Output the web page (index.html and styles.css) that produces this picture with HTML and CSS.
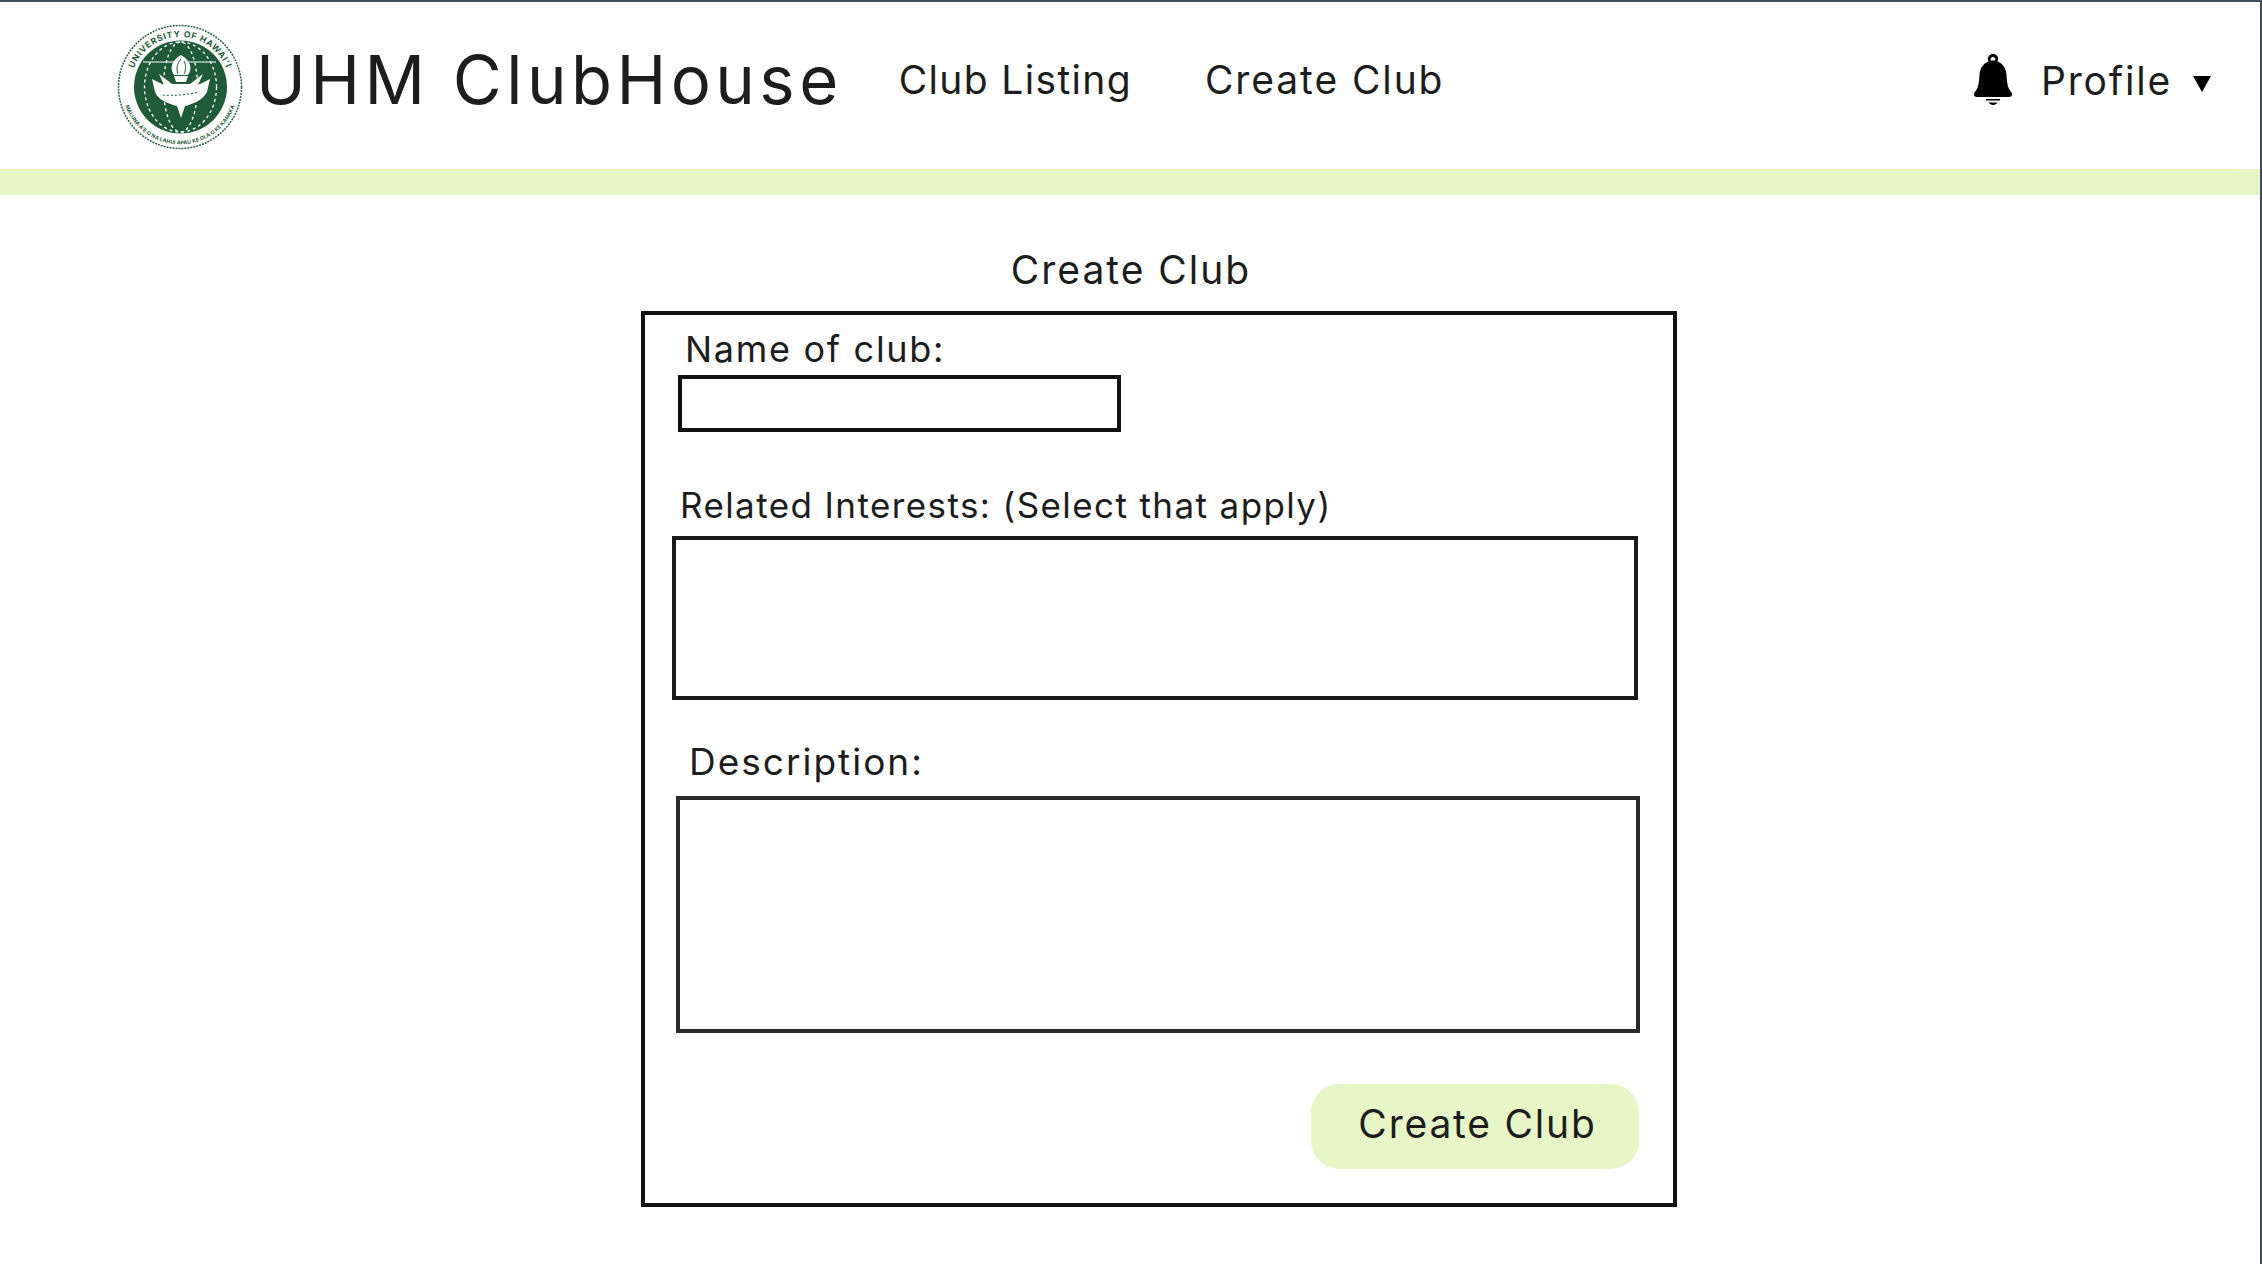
FILE: index.html
```html
<!DOCTYPE html>
<html lang="en">
<head>
    <meta charset="UTF-8">
    <meta name="viewport" content="width=device-width, initial-scale=1.0">
    <title>Create Club</title>
    <link rel="stylesheet" href="styles.css">
</head>
<body>

<div class="page">
    <header class="navbar">
        <svg class="seal" viewBox="0 0 126 126" aria-label="University of Hawaii seal">
            <defs>
                <path id="sealTop" d="M13.500 70 A50 50 0 1 1 112.500 70"/>
                <path id="sealBottom" d="M5.500 70 A58 58 0 0 0 120.500 70"/>
            </defs>
            <circle cx="63" cy="63" r="61.500" fill="#fff" stroke="#2c6143" stroke-width="1.500" stroke-dasharray="2 1"/>
            <circle cx="63.500" cy="63" r="46.500" fill="#1f5a39"/>
            <text class="seal-text"><textPath href="#sealTop" startOffset="50%" text-anchor="middle">UNIVERSITY OF HAWAI'I</textPath></text>
            <text class="seal-text small"><textPath href="#sealBottom" startOffset="50%" text-anchor="middle">MALUNA A'E O NA LAHUI APAU KE OLA O KE KANAKA</textPath></text>
            <ellipse class="seal-dots" cx="63.500" cy="63" rx="36" ry="45"/>
            <ellipse class="seal-dots" cx="63.500" cy="63" rx="17" ry="45"/>
            <path d="M26 38 H99" stroke="#fff" stroke-width="1.200" fill="none"/>
            <path d="M64 31 C55 36 52 44 57 51 H71 C76 44 73 36 64 31Z" fill="#fff"/>
            <path d="M64 35 C60 39 59 45 61 50 M67 37 C69 41 69 46 67 50" fill="none" stroke="#1f5a39" stroke-width="1"/>
            <path d="M57 52 H71 L69 58 H59Z" fill="#fff"/>
            <path d="M35 55 L47 61 L42 50 L55 60 H73 L86 50 L81 61 L93 55 L90 68 C86 76 76 80 68 82 L64 94 L60 82 C52 80 41 76 38 68Z" fill="#fff"/>
            <path d="M46 71 C55 72 70 71 82 68" fill="none" stroke="#1f5a39" stroke-width="1" stroke-dasharray="2 2"/>
        </svg>
        <a class="brand" href="#">UHM ClubHouse</a>
        <nav class="nav-links">
            <a href="#">Club Listing</a>
            <a href="#">Create Club</a>
        </nav>
        <div class="nav-right">
            <svg class="bell" viewBox="0 0 38 51" aria-label="Notifications">
                <path fill-rule="evenodd" d="M19 0c3 0 5.200 2.200 5.200 5 0 1-.3 1.800-.7 2.600C29 9.800 32 14.500 32.500 21c.5 7 1 12 3.500 15.500 1.300 1.700 2 2.600 2 4 0 1.500-1.200 2.500-3 2.500H3c-1.800 0-3-1-3-2.500 0-1.400.7-2.300 2-4C4.500 33 5 28 5.500 21 6 14.500 9 9.800 14.500 7.600 14.100 6.800 13.800 6 13.800 5c0-2.800 2.200-5 5.200-5zm0 3c-1.400 0-2.400 1-2.400 2.200 0 .6.200 1 .5 1.400.6-.1 1.200-.1 1.900-.1s1.300 0 1.900.1c.3-.4.500-.8.500-1.400C21.400 4 20.400 3 19 3z"/>
                <path d="M12 45h14v1.500H12zM14.500 48.500h9C22.500 50 21 51 19 51s-3.500-1-4.500-2.500z"/>
            </svg>
            <a class="profile" href="#">Profile</a>
            <svg class="caret" viewBox="0 0 18 16"><polygon points="0,0 18,0 9,16"/></svg>
        </div>
    </header>
    <div class="green-bar"></div>

    <h2 class="form-title">Create Club</h2>
    <form class="club-form" action="" method="post">
        <label class="lbl lbl-name" for="clubName">Name of club:</label>
        <input class="name-input" type="text" id="clubName" name="clubName">

        <label class="lbl lbl-interests" for="interests">Related Interests: (Select that apply)</label>
        <div class="interests-box" id="interests"></div>

        <label class="lbl lbl-desc" for="description">Description:</label>
        <textarea class="desc-box" id="description" name="description"></textarea>

        <div class="form-actions">
            <input class="submit-btn" type="submit" value="Create Club">
        </div>
    </form>
</div>

</body>
</html>
```
FILE: styles.css
```css
html, body {
    margin: 0;
    padding: 0;
    background-color: white;
}

body {
    font-family: Inter, "Noto Sans", sans-serif;
    color: #1d1d1d;
    overflow: hidden;
}

a {
    color: inherit;
    text-decoration: none;
}

.page {
    box-sizing: border-box;
    height: 1264px;
    border-top: 2px solid #3f4f5c;
    border-right: 2px solid #3f4f5c;
}

.navbar {
    display: flex;
    align-items: center;
    height: 167px;
    padding-left: 117px;
}

.seal {
    width: 126px;
    height: 126px;
    margin-top: 3px;
    flex-shrink: 0;
}

.seal-text {
    font-size: 8.500px;
    font-weight: 700;
    letter-spacing: 0.8px;
    fill: #1f5a39;
}

.seal-text.small {
    font-size: 5.200px;
    letter-spacing: 0.1px;
}

.seal-dots {
    fill: none;
    stroke: #fff;
    stroke-width: 1.300;
    stroke-dasharray: 3 3;
}

.brand {
    margin-left: 13px;
    font-size: 67px;
    letter-spacing: 4.450px;
    line-height: 1;
    margin-top: -13px;
}

.nav-links {
    display: flex;
    gap: 73px;
    margin-left: 56px;
    font-size: 39px;
    letter-spacing: 1.350px;
    margin-top: -13px;
}

.nav-links a:last-child {
    letter-spacing: 1.900px;
}

.nav-right {
    display: flex;
    align-items: center;
    margin-left: auto;
    padding-right: 49px;
}

.bell {
    width: 38px;
    height: 51px;
    margin-top: -12px;
}

.profile {
    margin-left: 29px;
    font-size: 39px;
    letter-spacing: 1.800px;
    margin-top: -11px;
}

.caret {
    width: 18px;
    height: 16px;
    margin-left: 21px;
    margin-top: -3px;
}

.green-bar {
    height: 26px;
    background-color: #e6f6c6;
}

.form-title {
    margin: 52px 0 0;
    padding-left: 2px;
    text-align: center;
    font-size: 39px;
    font-weight: 400;
    letter-spacing: 2px;
    line-height: 46px;
}

.club-form {
    box-sizing: border-box;
    width: 1036px;
    height: 896px;
    margin: 18px 0 0 641px;
    border: 4px solid #111;
    display: flex;
    flex-direction: column;
    align-items: flex-start;
}

.lbl {
    display: block;
    font-size: 35px;
    letter-spacing: 1.400px;
    line-height: 40px;
}

.lbl-name {
    margin: 14px 0 0 40px;
    font-size: 36px;
    letter-spacing: 1.700px;
}

.name-input {
    box-sizing: border-box;
    width: 443px;
    height: 57px;
    margin: 6px 0 0 33px;
    border: 4px solid #111;
    border-radius: 0;
    outline: none;
}

.lbl-interests {
    margin: 53px 0 0 35px;
}

.interests-box {
    box-sizing: border-box;
    width: 966px;
    height: 164px;
    margin: 11px 0 0 27px;
    border: 4px solid #1a1a1a;
}

.lbl-desc {
    margin: 42px 0 0 44px;
    font-size: 37px;
    letter-spacing: 2px;
}

.desc-box {
    box-sizing: border-box;
    width: 964px;
    height: 237px;
    margin: 14px 0 0 31px;
    border: 4px solid #2a2a2a;
    border-radius: 0;
    resize: none;
    outline: none;
}

.form-actions {
    display: flex;
    justify-content: flex-end;
    width: 994px;
    margin-top: 51px;
}

.submit-btn {
    width: 328px;
    height: 85px;
    padding: 0 0 7px 5px;
    background-color: #e6f6c6;
    color: #1d1d1d;
    border: none;
    border-radius: 28px;
    font-family: Inter, "Noto Sans", sans-serif;
    font-size: 39px;
    letter-spacing: 1.800px;
    cursor: pointer;
}
```
